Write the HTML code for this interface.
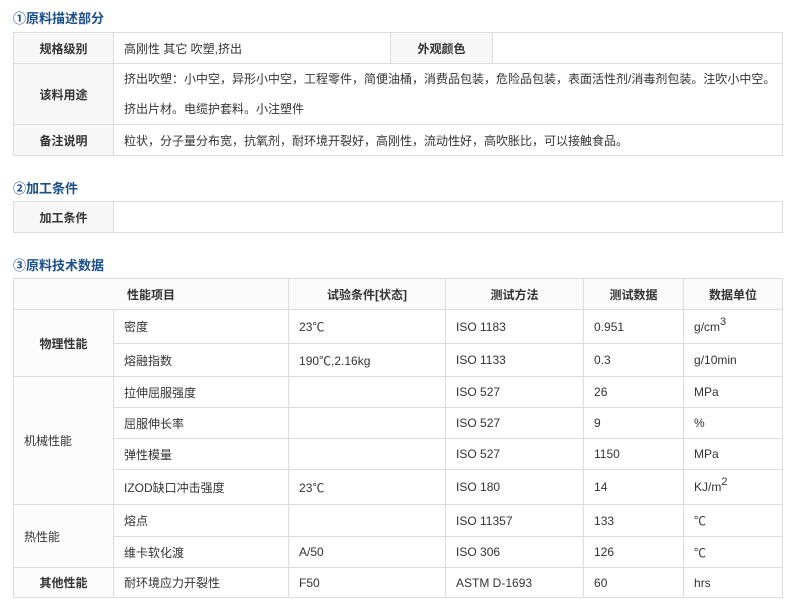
<!DOCTYPE html>
<html><head><meta charset="utf-8"><style>
body{margin:0;background:#fff;width:788px;height:608px;overflow:hidden;font-family:"Liberation Sans","Noto Sans CJK SC","WenQuanYi Zen Hei",sans-serif;font-size:12px;color:#333}
.t{position:absolute;left:13px;font-weight:bold;color:#1b4f8c;font-size:13px}
table{position:absolute;left:13px;width:769px;border-collapse:collapse;table-layout:fixed}
td{border:1px solid #ddd;padding:0 0 0 10px;vertical-align:middle;background:#fff}
td.l{background:#f7f7f7;font-weight:bold;text-align:center;padding:0}
.h td{font-weight:bold;text-align:center;padding:0;background:#fafafa}
td.g{background:#fcfcfc}
sup{font-size:11px;vertical-align:6px;line-height:0}
</style></head><body>
<div class="t" style="top:8px">①原料描述部分</div>
<table style="top:32px">
<col style="width:100px"><col style="width:277px"><col style="width:102px"><col style="width:290px">
<tr style="height:31px"><td class="l">规格级别</td><td>高刚性 其它 吹塑,挤出</td><td class="l">外观颜色</td><td></td></tr>
<tr style="height:61px"><td class="l">该料用途</td><td colspan="3" style="line-height:30px">挤出吹塑：小中空，异形小中空，工程零件，简便油桶，消费品包装，危险品包装，表面活性剂/消毒剂包装。注吹小中空。<br>挤出片材。电缆护套料。小注塑件</td></tr>
<tr style="height:31px"><td class="l">备注说明</td><td colspan="3">粒状，分子量分布宽，抗氧剂，耐环境开裂好，高刚性，流动性好，高吹胀比，可以接触食品。</td></tr>
</table>
<div class="t" style="top:178px">②加工条件</div>
<table style="top:201px">
<col style="width:100px"><col style="width:669px">
<tr style="height:31px"><td class="l">加工条件</td><td></td></tr>
</table>
<div class="t" style="top:255px">③原料技术数据</div>
<table style="top:278px">
<col style="width:100px"><col style="width:175px"><col style="width:157px"><col style="width:138px"><col style="width:100px"><col style="width:99px">
<tr class="h" style="height:31px"><td colspan="2">性能项目</td><td>试验条件[状态]</td><td>测试方法</td><td>测试数据</td><td>数据单位</td></tr>
<tr style="height:34px"><td rowspan="2" class="g" style="font-weight:bold;text-align:center;padding:0">物理性能</td><td>密度</td><td>23℃</td><td>ISO 1183</td><td>0.951</td><td>g/cm<sup>3</sup></td></tr>
<tr style="height:33px"><td>熔融指数</td><td>190℃,2.16kg</td><td>ISO 1133</td><td>0.3</td><td>g/10min</td></tr>
<tr style="height:31px"><td rowspan="4" class="g">机械性能</td><td>拉伸屈服强度</td><td></td><td>ISO 527</td><td>26</td><td>MPa</td></tr>
<tr style="height:31px"><td>屈服伸长率</td><td></td><td>ISO 527</td><td>9</td><td>%</td></tr>
<tr style="height:31px"><td>弹性模量</td><td></td><td>ISO 527</td><td>1150</td><td>MPa</td></tr>
<tr style="height:35px"><td>IZOD缺口冲击强度</td><td>23℃</td><td>ISO 180</td><td>14</td><td>KJ/m<sup>2</sup></td></tr>
<tr style="height:32px"><td rowspan="2" class="g">热性能</td><td>熔点</td><td></td><td>ISO 11357</td><td>133</td><td>℃</td></tr>
<tr style="height:31px"><td>维卡软化渡</td><td>A/50</td><td>ISO 306</td><td>126</td><td>℃</td></tr>
<tr style="height:30px"><td class="g" style="font-weight:bold;text-align:center;padding:0">其他性能</td><td>耐环境应力开裂性</td><td>F50</td><td>ASTM D-1693</td><td>60</td><td>hrs</td></tr>
</table>
</body></html>
